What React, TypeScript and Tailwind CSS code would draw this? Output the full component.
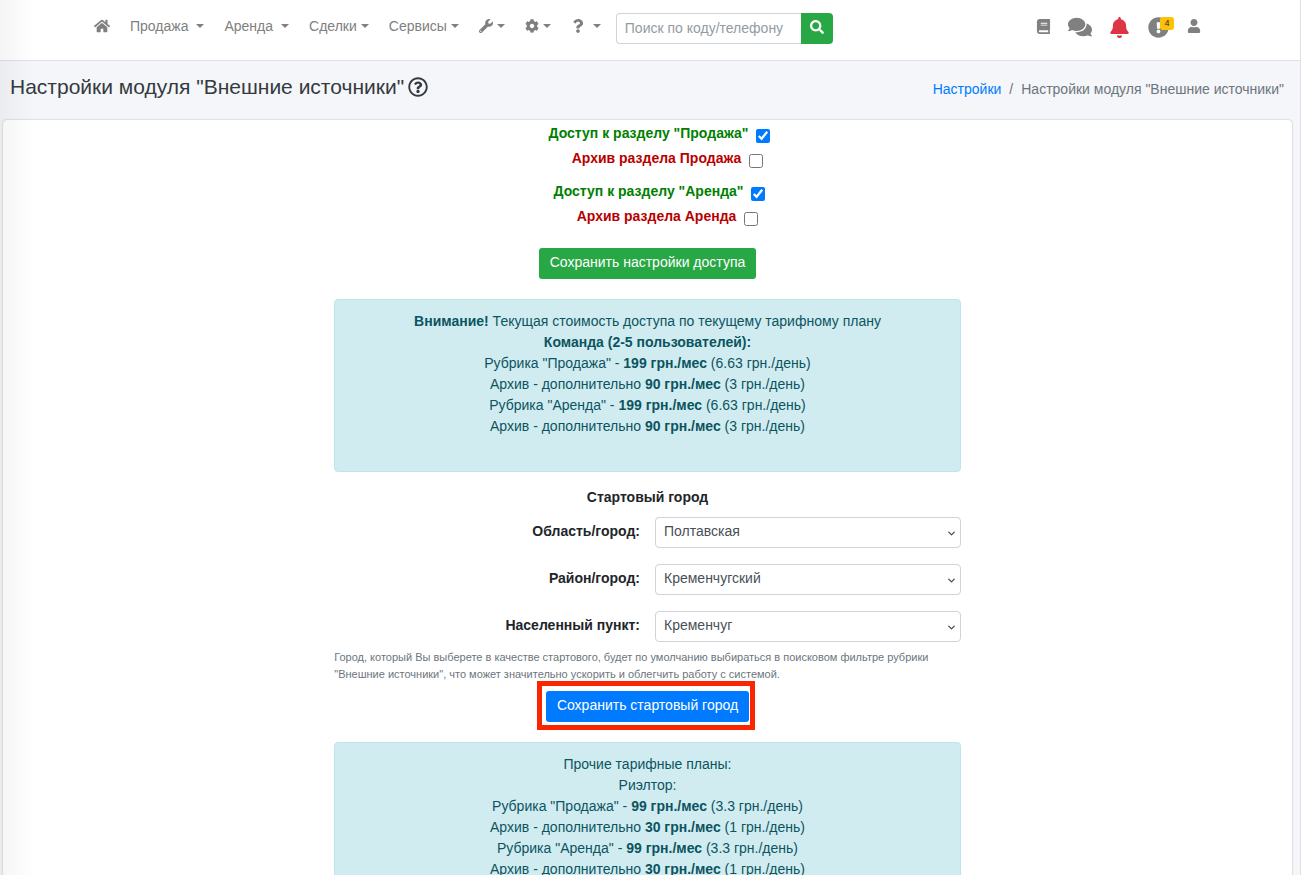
import type { ReactNode } from "react";
import {
  FaBell,
  FaBook,
  FaCog,
  FaComments,
  FaExclamationCircle,
  FaHome,
  FaQuestion,
  FaRegQuestionCircle,
  FaSearch,
  FaUser,
  FaWrench,
} from "react-icons/fa";
import { FiChevronDown } from "react-icons/fi";

const access = [
  { id: "sale", label: 'Доступ к разделу "Продажа"', archive: "Архив раздела Продажа" },
  { id: "rent", label: 'Доступ к разделу "Аренда"', archive: "Архив раздела Аренда" },
];

const cities = [
  { id: "region", label: "Область/город:", value: "Полтавская" },
  { id: "district", label: "Район/город:", value: "Кременчугский" },
  { id: "town", label: "Населенный пункт:", value: "Кременчуг" },
];

const currentPrices = [
  { name: 'Рубрика "Продажа" -', price: "199 грн./мес", day: "(6.63 грн./день)" },
  { name: "Архив - дополнительно", price: "90 грн./мес", day: "(3 грн./день)" },
  { name: 'Рубрика "Аренда" -', price: "199 грн./мес", day: "(6.63 грн./день)" },
  { name: "Архив - дополнительно", price: "90 грн./мес", day: "(3 грн./день)" },
];

const realtorPrices = [
  { name: 'Рубрика "Продажа" -', price: "99 грн./мес", day: "(3.3 грн./день)" },
  { name: "Архив - дополнительно", price: "30 грн./мес", day: "(1 грн./день)" },
  { name: 'Рубрика "Аренда" -', price: "99 грн./мес", day: "(3.3 грн./день)" },
  { name: "Архив - дополнительно", price: "30 грн./мес", day: "(1 грн./день)" },
];

function Caret() {
  return <span className="border-x-4 border-t-4 border-x-transparent border-t-current" />;
}

function MenuButton({ children, label, wide }: { children: ReactNode; label?: string; wide?: boolean }) {
  return (
    <button type="button" aria-label={label} className={wide ? "flex items-center gap-2" : "flex items-center gap-1"}>
      {children}
      <Caret />
    </button>
  );
}

function Navbar() {
  return (
    <nav className="flex h-[61px] items-start justify-between border-b border-[#dee2e6] bg-white pt-3 pr-[99px] pl-[94px] text-[#808080]">
      <div className="flex items-start">
        <div className="flex h-7 items-center gap-5">
          <a href="#" aria-label="Главная"><FaHome size={16} /></a>
          <MenuButton wide>Продажа</MenuButton>
          <MenuButton wide>Аренда</MenuButton>
          <MenuButton>Сделки</MenuButton>
          <MenuButton>Сервисы</MenuButton>
          <MenuButton label="Инструменты"><FaWrench size={14} /></MenuButton>
          <MenuButton label="Настройки"><FaCog size={14} /></MenuButton>
          <MenuButton label="Помощь" wide><FaQuestion size={14} /></MenuButton>
        </div>
        <form className="mt-px ml-[15px] flex h-[31px]">
          <input
            type="text"
            aria-label="Поиск"
            placeholder="Поиск по коду/телефону"
            className="w-[185px] rounded-l border border-r-0 border-[#ced4da] px-2 pb-0.5 text-sm outline-none placeholder:text-[#939ba2]"
          />
          <button type="button" aria-label="Найти" className="flex w-8 items-center justify-center rounded-r bg-[#28a745] pb-1 text-white">
            <FaSearch size={14} />
          </button>
        </form>
      </div>
      <div className="flex h-[30px] items-center">
        <a href="#" aria-label="Справочник" className="mr-[17px] pb-0.5"><FaBook size={15} /></a>
        <a href="#" aria-label="Сообщения" className="mr-[17px]"><FaComments size={24} /></a>
        <a href="#" aria-label="Уведомления" className="mr-[18px] text-[#dc3545]"><FaBell size={21} /></a>
        <a href="#" aria-label="Предупреждения" className="relative mr-[18px]">
          <FaExclamationCircle size={21} />
          <span className="absolute top-0 left-3 flex h-[13px] w-3.5 items-center justify-center rounded-[3px] bg-[#ffc107] text-[9px] text-[#1f2d3d]">4</span>
        </a>
        <a href="#" aria-label="Профиль" className="pb-0.5"><FaUser size={14} /></a>
      </div>
    </nav>
  );
}

function Prices({ rows }: { rows: typeof currentPrices }) {
  return (
    <>
      {rows.map((row, i) => (
        <p key={i}>
          {row.name} <b>{row.price}</b> {row.day}
        </p>
      ))}
    </>
  );
}

function Alert({ children }: { children: ReactNode }) {
  return (
    <div className="rounded border border-[#bee5eb] bg-[#d1ecf1] px-5 pt-[11px] pb-[34px] text-center text-[#0c5460]">
      {children}
    </div>
  );
}

export default function App() {
  return (
    <div className="relative h-screen overflow-hidden border-r border-[#dee2e6] bg-[#f4f6f9] font-['Liberation_Sans',Arial,sans-serif] text-sm leading-[21px] text-[#212529]">
      <Navbar />
      <header className="flex items-center justify-between pt-3 pr-4 pb-[19px] pl-2.5">
        <h1 className="flex items-center gap-1 text-[21px] leading-7 text-[#343a40]">
          Настройки модуля "Внешние источники"
          <FaRegQuestionCircle size={20} />
        </h1>
        <nav className="flex gap-2 pt-1 text-[#6c757d]">
          <a href="#" className="text-[#007bff]">Настройки</a>
          <span>/</span>
          <span>Настройки модуля "Внешние источники"</span>
        </nav>
      </header>

      <main className="mr-2 ml-[3px] flex flex-col items-center rounded bg-white shadow-[0_0_2px_rgba(0,0,0,0.3)]">
        <div className="w-1/2 px-[9px] pt-[3px]">
          {access.map((item) => (
            <div key={item.id} className="mb-2 font-bold">
              <div className="flex h-[25px] items-start justify-center gap-2 pl-6 text-[#008000]">
                <label htmlFor={item.id}>{item.label}</label>
                <input id={item.id} type="checkbox" defaultChecked className="mt-1.5 h-3.5 w-3.5 accent-[#007bff]" />
              </div>
              <div className="flex h-[25px] items-start justify-center gap-2 pl-10 text-[#b80000]">
                <label htmlFor={item.id + "-archive"}>{item.archive}</label>
                <input id={item.id + "-archive"} type="checkbox" className="mt-1.5 h-3.5 w-3.5" />
              </div>
            </div>
          ))}

          <div className="mt-[17px] mb-5 flex justify-center">
            <button type="button" className="h-[31px] rounded-[3px] bg-[#28a745] px-[11px] pb-0.5 text-white">
              Сохранить настройки доступа
            </button>
          </div>

          <Alert>
            <p><b>Внимание!</b> Текущая стоимость доступа по текущему тарифному плану</p>
            <p className="font-bold">Команда (2-5 пользователей):</p>
            <Prices rows={currentPrices} />
          </Alert>

          <h2 className="mt-[15px] mb-[9px] text-center font-bold">Стартовый город</h2>
          {cities.map((city, i) => (
            <div key={city.id} className={i < 2 ? "mb-4 grid grid-cols-2 gap-[15px]" : "grid grid-cols-2 gap-[15px]"}>
              <label htmlFor={city.id} className="pt-1 text-right font-bold">{city.label}</label>
              <div className="relative">
                <select
                  id={city.id}
                  className="block h-[31px] w-full appearance-none rounded border border-[#ced4da] bg-white px-2 pb-0.5 text-[#495057]"
                >
                  <option>{city.value}</option>
                </select>
                <FiChevronDown size={11} strokeWidth={3} className="pointer-events-none absolute top-[11px] right-1 text-[#495057]" />
              </div>
            </div>
          ))}

          <p className="mt-[7px] text-[11px] leading-[17px] text-[#6c757d]">
            Город, который Вы выберете в качестве стартового, будет по умолчанию выбираться в поисковом фильтре рубрики
            "Внешние источники", что может значительно ускорить и облегчить работу с системой.
          </p>

          <div className="mt-2 mb-5 flex justify-center">
            <div className="relative">
              <button type="button" className="h-[31px] rounded-[3px] bg-[#007bff] px-[11px] pb-0.5 text-white">
                Сохранить стартовый город
              </button>
              <span className="pointer-events-none absolute -top-2.5 -right-1.5 -bottom-2 -left-[9px] border-5 border-[#fb2500]" />
            </div>
          </div>

          <Alert>
            <p>Прочие тарифные планы:</p>
            <p>Риэлтор:</p>
            <Prices rows={realtorPrices} />
          </Alert>
        </div>
      </main>

      <div className="pointer-events-none absolute inset-y-0 left-0 w-9 bg-linear-to-r from-black/4 to-transparent" />
    </div>
  );
}
